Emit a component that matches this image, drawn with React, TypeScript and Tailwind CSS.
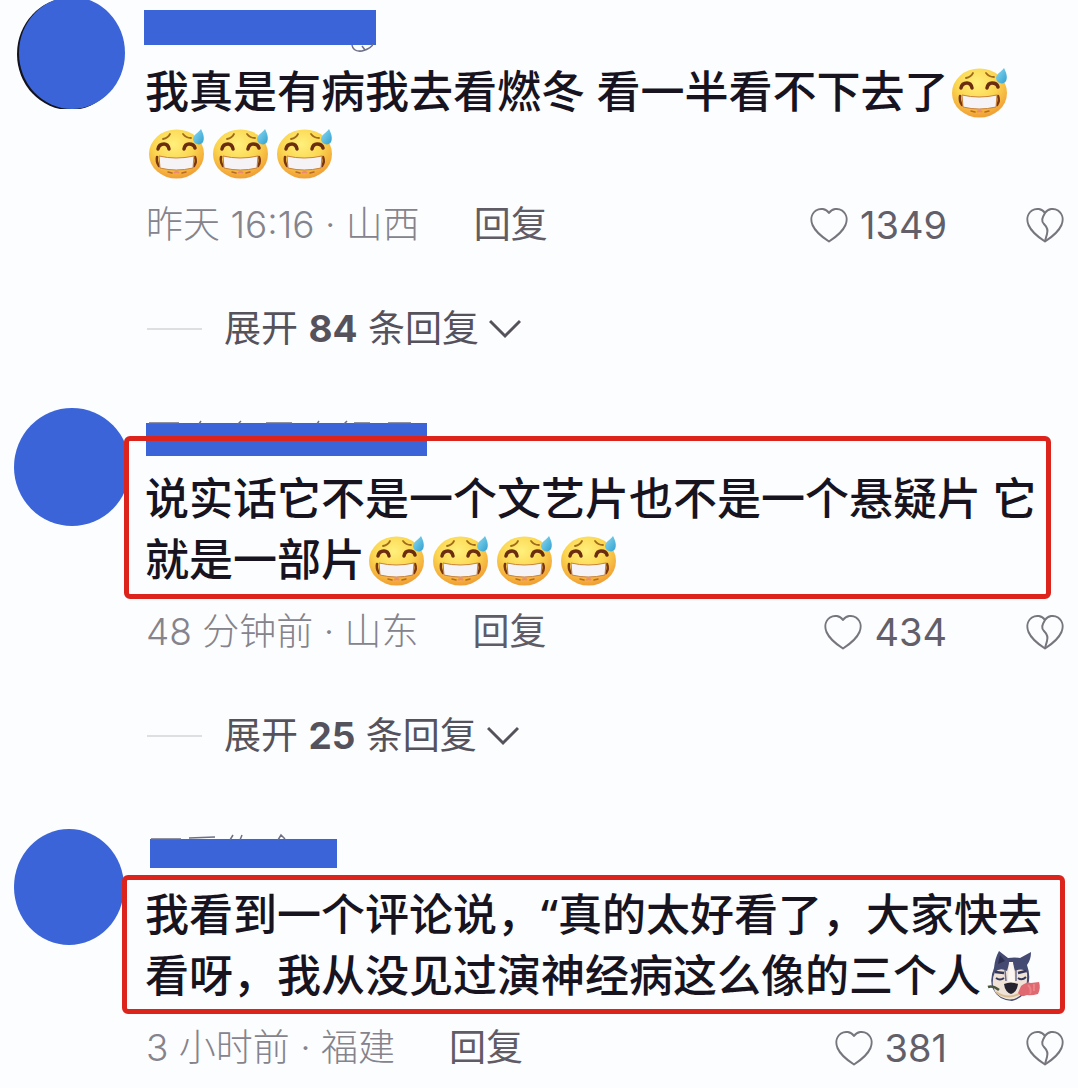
import type { ReactNode } from 'react'

function SweatSmile() {
  return (
    <svg viewBox="0 0 58 52" role="img" aria-label="尴尬的笑" className="inline-block w-[58px] h-[52px] mx-[3px] align-[-10px]">
      <defs>
        <radialGradient id="face" cx="0.45" cy="0.3" r="0.75">
          <stop offset="0" stopColor="#fff07c" />
          <stop offset="0.5" stopColor="#fbd650" />
          <stop offset="0.85" stopColor="#f3a838" />
          <stop offset="1" stopColor="#e9983a" />
        </radialGradient>
        <linearGradient id="drop" x1="0" y1="0" x2="1" y2="1">
          <stop offset="0" stopColor="#8fdcf2" />
          <stop offset="1" stopColor="#2f9fcf" />
        </linearGradient>
      </defs>
      <ellipse cx="28.500" cy="27" rx="27.500" ry="24.500" fill="url(#face)" />
      <path d="M15 12Q20 11 22 7M35 7Q38 11 43 11" fill="none" stroke="#a06a1c" strokeWidth="1.800" strokeLinecap="round" />
      <path d="M10 22Q11 17 16 17Q20 17 21 22M36 22Q37 17 41 17Q46 17 47 21" fill="none" stroke="#6b2d10" strokeWidth="3.500" strokeLinecap="round" />
      <path d="M9 30Q8 35 11 39M47 30Q49 35 46 39" fill="none" stroke="#7a3512" strokeWidth="2.500" strokeLinecap="round" />
      <path d="M11 29Q28 33 46 29L45 41Q28 45 12 41Z" fill="#f6f3f6" stroke="#c9823a" strokeWidth="1" strokeLinejoin="round" />
      <path d="M20 45L24 46M34 46L38 45" stroke="#b56a28" strokeWidth="1.500" strokeLinecap="round" />
      <path d="M26 46Q29 44 31 46" fill="none" stroke="#ee8a72" strokeWidth="2" />
      <path d="M53 2C50 6 45 8 45 12.500C46 18 53 19 55 15C57 11 55 6 53 2Z" fill="url(#drop)" />
    </svg>
  )
}

function Husky() {
  return (
    <svg viewBox="0 0 54 52" role="img" aria-label="叼玫瑰的狗" className="inline-block w-[54px] h-[52px] mx-[6px] align-[-10px]">
      <path d="M12 1L21 8Q28 7 33 8L44 2Q44 10 40 15Q44 26 41 35Q38 48 25 51Q11 50 6 39Q2 30 7 18Q8 8 12 1Z" fill="#454a73" />
      <path d="M13 5L18 11L11 14Z" fill="#2d3050" />
      <path d="M8 22Q13 17 20 21L22 14H26L28 21Q36 17 40 23Q41 38 35 44Q28 51 19 49Q8 46 6 36Q5 28 8 22Z" fill="#efe3d8" />
      <path d="M22 12L21 31L26 33L28 31L26 12Z" fill="#fbf6f1" />
      <path d="M18 20L19 31M29 20L29 31" stroke="#6d6f8e" strokeWidth="1.500" />
      <path d="M8 22L17 23M31 23L39 21" stroke="#33375a" strokeWidth="2.500" />
      <path d="M9 28Q13 31 17 28M31 28Q35 31 39 27" fill="none" stroke="#33375a" strokeWidth="2" />
      <path d="M17 34Q24 31 31 34Q30 42 24 44Q18 42 17 34Z" fill="#25232f" />
      <path d="M9 42Q20 50 32 44" fill="none" stroke="#d7bd91" strokeWidth="2" />
      <path d="M1 37Q6 35 12 40" fill="none" stroke="#48563b" strokeWidth="2.500" />
      <path d="M34 36Q40 31 44 33L52 32Q54 38 51 44Q44 46 40 45Q34 48 31 43Z" fill="#e06a72" />
      <path d="M41 35Q45 39 43 44M47 34L47 41" fill="none" stroke="#ea8286" strokeWidth="2" />
    </svg>
  )
}

function HeartIcon({ broken = false }: { broken?: boolean }) {
  return (
    <svg viewBox="0 0 38 36" fill="none" stroke="#77757d" strokeWidth="2" strokeLinejoin="round" className="w-[38px] h-9" aria-hidden="true">
      <path d="M19 6C16 1.500 10 .8 6 3.500C1 7 .5 13 2.500 18C5.500 25 12 30 19 34.500C26 30 32.500 25 35.500 18C37.500 13 37 7 32 3.500C28 .8 22 1.500 19 6Z" />
      {broken && <path d="M19 6C16 11 15 14 18 17C22 21 22 24 21 27L19 34" />}
    </svg>
  )
}

function Chevron() {
  return (
    <svg viewBox="0 0 32 20" fill="none" stroke="#55525c" strokeWidth="3" className="w-8 h-5" aria-hidden="true">
      <path d="M1 2L16 17L31 2" />
    </svg>
  )
}

interface Comment {
  id: number
  article: string
  avatar: string
  name: string
  // strokes of the nickname that stick out of the cover
  traces: string
  frame?: string
  text: ReactNode
  time: string
  likes: number
  replies?: number
}

const comments: Comment[] = [
  {
    id: 1,
    article: '',
    avatar: 'w-[106px] h-[112px] -mt-[3px] ml-[19px] shadow-[-2px_1px_0_0_#14131c]',
    name: 'mt-[10px] mb-4 w-[232px] h-[35px] -ml-px',
    traces: 'M208 35Q209 42 218 41Q228 38 229 34M218 36L221 40',
    text: (
      <>
        我真是有病我去看燃冬 看一半看不下去了
        <SweatSmile />
        <SweatSmile />
        <SweatSmile />
        <SweatSmile />
      </>
    ),
    time: '昨天 16:16 · 山西',
    likes: 1349,
    replies: 84,
  },
  {
    id: 2,
    article: 'mt-[57px]',
    avatar: 'w-[116px] h-[118px] ml-[14px]',
    name: 'mt-[15px] mb-3 w-[281px] h-[33px] ml-px',
    traces: 'M3 0H33M53 1L55-2M92 1L95-2M120 0H146M171 1L173-2M198 1L201-2M208 0H224M242 0H265',
    frame: 'left-[124px] right-[27px] top-[28px] h-[163px]',
    text: (
      <>
        说实话它不是一个文艺片也不是一个悬疑片 它就是一部片
        <SweatSmile />
        <SweatSmile />
        <SweatSmile />
        <SweatSmile />
      </>
    ),
    time: '48 分钟前 · 山东',
    likes: 434,
    replies: 25,
  },
  {
    id: 3,
    article: 'mt-[71px]',
    avatar: 'w-[110px] h-[116px] ml-[14px]',
    name: 'mt-[10px] mb-4 w-[187px] h-[29px] ml-[5px]',
    traces: 'M1 0H31M39-1L65-2M80 1L83-4M90 1L92-4M128 1L131-4L135 0',
    frame: 'left-[122px] right-[13px] top-[46px] h-[139px]',
    text: (
      <>
        我看到一个评论说，“真的太好看了，大家快去看呀，我从没见过演神经病这么像的三个人
        <Husky />
      </>
    ),
    time: '3 小时前 · 福建',
    likes: 381,
  },
]

function CommentItem({ comment }: { comment: Comment }) {
  const { article, avatar, name, traces, frame, text, time, likes, replies } = comment
  return (
    <article className={`relative flex items-start ${article}`}>
      <div className="mr-5 w-[125px] shrink-0 overflow-hidden">
        <div className={`rounded-[50%] bg-[#3a64d8] ${avatar}`} />
      </div>
      <div className="min-w-0 flex-1">
        <div className={`relative bg-[#3a64d8] ${name}`}>
          <svg className="absolute inset-0 w-full h-full overflow-visible" fill="none" stroke="#6d6f86" strokeWidth="1.500" aria-hidden="true">
            <path d={traces} />
          </svg>
        </div>
        <p className="pr-5 font-['Noto_Sans','Noto_Sans_CJK_SC',sans-serif] text-[44px] leading-[61px] font-medium text-[#17141f]">{text}</p>
        <div className="mt-5 flex h-11 items-center pl-px pr-[14px] text-[37px] leading-[44px]">
          <span className="font-light text-[#85838b]">{time}</span>
          <button className="ml-[54px] text-[#5f5c66]">回复</button>
          <button className="ml-auto flex items-center gap-3 text-[38px] text-[#625f69]" aria-label={`点赞 ${likes}`}>
            <HeartIcon />
            {likes}
          </button>
          <button className="ml-[79px]" aria-label="不喜欢">
            <HeartIcon broken />
          </button>
        </div>
        {replies && (
          <button className="mt-[60px] flex h-11 items-center text-[37px] leading-[44px] text-[#55525c]">
            <span className="ml-0.5 mr-[22px] h-0.5 w-[55px] bg-[#dedfe3]" />
            <span>
              展开 <b>{replies}</b> 条回复
            </span>
            <span className="ml-2.5">
              <Chevron />
            </span>
          </button>
        )}
      </div>
      {frame && <div className={`pointer-events-none absolute rounded-md border-5 border-[#dc241c] ${frame}`} />}
    </article>
  )
}

export default function App() {
  return (
    <main className="flow-root min-h-screen overflow-hidden bg-[#fbfdff] pb-5 font-[Inter,'Noto_Sans_CJK_SC',sans-serif]" lang="zh-CN">
      {comments.map((comment) => (
        <CommentItem key={comment.id} comment={comment} />
      ))}
    </main>
  )
}
